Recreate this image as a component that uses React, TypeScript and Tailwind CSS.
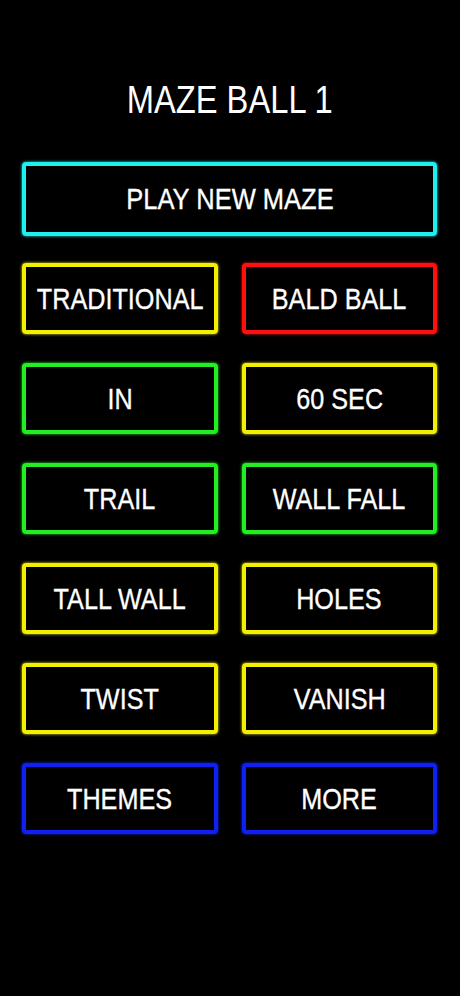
import React from "react";

const font = { fontFamily: '"Liberation Sans", Arial, sans-serif' };

function Btn({ label, cls }: { label: string; cls: string }) {
  return (
    <div
      className={`h-[71px] flex items-center justify-center border-[4px] rounded-[4px] text-white text-[30px] leading-none ${cls}`}
    >
      <span className="inline-block whitespace-nowrap scale-x-[0.84] [-webkit-text-stroke:0.35px_white]">{label}</span>
    </div>
  );
}

export default function App() {
  const Y = "border-[#f2ef00] shadow-[0_0_3px_#f2ef00]";
  const R = "border-[#ff1010] shadow-[0_0_3px_#ff1010]";
  const G = "border-[#22ee22] shadow-[0_0_3px_#22ee22]";
  const B = "border-[#1020f0] shadow-[0_0_3px_#1020f0]";
  return (
    <div className="w-[460px] h-[996px] bg-black overflow-hidden" style={font}>
      <div className="pt-[81px] text-center text-white text-[38px] leading-[38px] font-normal">
        <span className="inline-block whitespace-nowrap scale-x-[0.86]">MAZE BALL 1</span>
      </div>
      <div className="pl-[22px] pr-[23px] pt-[43px]">
        <div className="h-[74px] flex items-center justify-center border-[4px] rounded-[4px] border-[#1ef0f0] shadow-[0_0_3px_#1ef0f0] text-white text-[30px] leading-none">
          <span className="inline-block whitespace-nowrap scale-x-[0.85] [-webkit-text-stroke:0.35px_white]">PLAY NEW MAZE</span>
        </div>
        <div className="mt-[27px] grid grid-cols-2 gap-x-[24px] gap-y-[29px]">
          <Btn label="TRADITIONAL" cls={Y} />
          <Btn label="BALD BALL" cls={R} />
          <Btn label="IN" cls={G} />
          <Btn label="60 SEC" cls={Y} />
          <Btn label="TRAIL" cls={G} />
          <Btn label="WALL FALL" cls={G} />
          <Btn label="TALL WALL" cls={Y} />
          <Btn label="HOLES" cls={Y} />
          <Btn label="TWIST" cls={Y} />
          <Btn label="VANISH" cls={Y} />
          <Btn label="THEMES" cls={B} />
          <Btn label="MORE" cls={B} />
        </div>
      </div>
    </div>
  );
}
